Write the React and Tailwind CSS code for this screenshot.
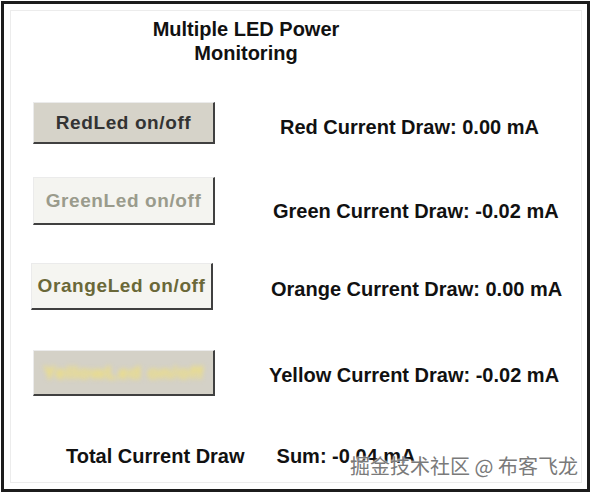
import React from "react";

const leds = [
    { name: "RedLed on/off", label: "Red Current Draw: 0.00 mA", row: "mt-[37px] h-[42px]", btn: "ml-[22px] bg-[#d6d3c9]", text: "text-[#333333]", labelCls: "ml-[65px] pt-[13px]" },
    { name: "GreenLed on/off", label: "Green Current Draw: -0.02 mA", row: "mt-[33px] h-[48px]", btn: "ml-[22px] bg-[#f4f4f0]", text: "text-[#9a9b8c]", labelCls: "ml-[58px] pt-[22px]" },
    { name: "OrangeLed on/off", label: "Orange Current Draw: 0.00 mA", row: "mt-[38px] h-[47px]", btn: "ml-[20px] bg-[#f5f5f1]", text: "text-[#6a6838]", labelCls: "ml-[58px] pt-[14px]" },
    { name: "YellowLed on/off", label: "Yellow Current Draw: -0.02 mA", row: "mt-[40px] h-[46px]", btn: "ml-[22px] bg-[#d4d1c7]", text: "text-[#f3e173] blur-[2.5px]", labelCls: "ml-[54px] pt-[13px]" },
];

function LedRow({ led }) {
    return (
        <div className={`flex items-start ${led.row}`}>
            {/* Windows style push button */}
            <div className={`${led.btn} w-[182px] h-full flex items-center justify-center border-t border-l border-[#ebebeb] border-b-2 border-r-2 border-b-[#404040] border-r-[#404040]`}>
                <span className={`text-[19px] font-bold tracking-[0.6px] leading-[24px] ${led.text}`}>
                    {led.name}
                </span>
            </div>
            <div className={`${led.labelCls} text-[20px] font-bold leading-[24px] text-[#111111] whitespace-nowrap`}>
                {led.label}
            </div>
        </div>
    );
}

export default function App() {
    return (
        <div className="w-[591px] h-[493px] bg-white font-['Liberation_Sans',Arial,sans-serif]">
            <div className="relative ml-[1px] mt-[1px] w-[589px] h-[491px] border-[3px] border-[#1c1c1c] bg-white">
                <div className="mt-[6px] ml-[6px] w-[572px] h-[473px] border border-[#ececec]">
                    {/* Title */}
                    <div className="pt-[6px] w-[470px] text-center text-[20px] font-bold leading-[24px] text-[#111111]">
                        <div>Multiple LED Power</div>
                        <div>Monitoring</div>
                    </div>

                    {leds.map((led) => (
                        <LedRow key={led.name} led={led} />
                    ))}

                    {/* Totals */}
                    <div className="mt-[48px] ml-[55px] flex gap-[32px] text-[20px] font-bold leading-[24px] text-[#111111] whitespace-nowrap">
                        <span>Total Current Draw</span>
                        <span>Sum: -0.04 mA</span>
                    </div>
                </div>

                {/* watermark */}
                <div className="absolute left-[346px] top-[450px] text-[20px] leading-[24px] text-[#7a7a7a] whitespace-nowrap font-['Noto_Sans_CJK_SC',sans-serif] [text-shadow:0_0_2px_#ffffff,0_0_2px_#ffffff]">
                    掘金技术社区 @ 布客飞龙
                </div>
            </div>
        </div>
    );
}
